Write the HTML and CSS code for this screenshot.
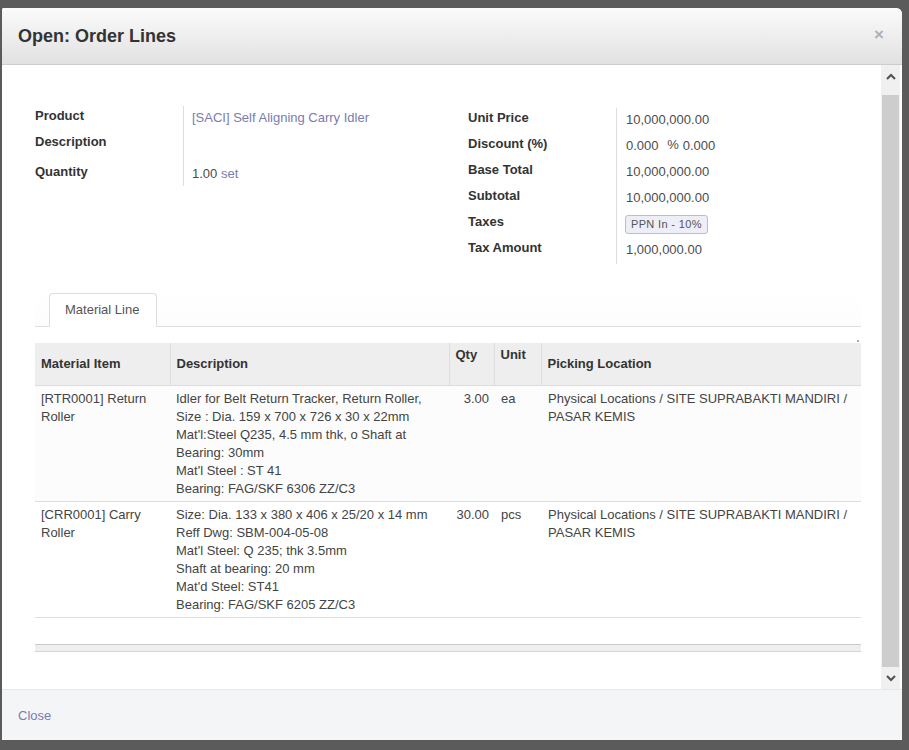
FILE: index.html
```html
<!DOCTYPE html>
<html>
<head>
<meta charset="utf-8">
<title>Open: Order Lines</title>
<link rel="stylesheet" href="styles.css">
</head>
<body>
<div class="backdrop">
  <div class="modal">
    <div class="modal-header">
      <h4 class="modal-title">Open: Order Lines</h4>
      <span class="close-x">×</span>
    </div>
    <div class="modal-body">
      <div class="content">
        <div class="form-groups">
          <div class="group group-left">
            <div class="field-label r1">Product</div>
            <div class="field-value r1"><a class="link">[SACI] Self Aligning Carry Idler</a></div>
            <div class="field-label r2">Description</div>
            <div class="field-value r2"></div>
            <div class="field-label r3">Quantity</div>
            <div class="field-value r3">1.00 <a class="link">set</a></div>
          </div>
          <div class="group group-right">
            <div class="field-label">Unit Price</div>
            <div class="field-value">10,000,000.00</div>
            <div class="field-label">Discount (%)</div>
            <div class="field-value">0.000 <span class="pct">%</span>0.000</div>
            <div class="field-label">Base Total</div>
            <div class="field-value">10,000,000.00</div>
            <div class="field-label">Subtotal</div>
            <div class="field-value">10,000,000.00</div>
            <div class="field-label">Taxes</div>
            <div class="field-value"><span class="badge">PPN In - 10%</span></div>
            <div class="field-label">Tax Amount</div>
            <div class="field-value">1,000,000.00</div>
          </div>
        </div>

        <div class="notebook">
          <div class="tab-bar">
            <div class="tab">Material Line</div>
          </div>
          <div class="tab-pane">
            <span class="dot"></span>
            <table class="lines">
              <colgroup>
                <col class="c-item"><col class="c-desc"><col class="c-qty"><col class="c-unit"><col class="c-loc">
              </colgroup>
              <thead>
                <tr>
                  <th>Material Item</th>
                  <th class="sep">Description</th>
                  <th class="sep top">Qty</th>
                  <th class="sep top">Unit</th>
                  <th class="sep">Picking Location</th>
                </tr>
              </thead>
              <tbody>
                <tr class="odd">
                  <td>[RTR0001] Return Roller</td>
                  <td>Idler for Belt Return Tracker, Return Roller,<br>Size : Dia. 159 x 700 x 726 x 30 x 22mm<br>Mat'l:Steel Q235, 4.5 mm thk, o Shaft at<br>Bearing: 30mm<br>Mat'l Steel : ST 41<br>Bearing: FAG/SKF 6306 ZZ/C3</td>
                  <td class="num">3.00</td>
                  <td>ea</td>
                  <td>Physical Locations / SITE SUPRABAKTI MANDIRI /<br>PASAR KEMIS</td>
                </tr>
                <tr>
                  <td>[CRR0001] Carry Roller</td>
                  <td>Size: Dia. 133 x 380 x 406 x 25/20 x 14 mm<br>Reff Dwg: SBM-004-05-08<br>Mat'l Steel: Q 235; thk 3.5mm<br>Shaft at bearing: 20 mm<br>Mat'd Steel: ST41<br>Bearing: FAG/SKF 6205 ZZ/C3</td>
                  <td class="num">30.00</td>
                  <td>pcs</td>
                  <td>Physical Locations / SITE SUPRABAKTI MANDIRI /<br>PASAR KEMIS</td>
                </tr>
              </tbody>
            </table>
            <div class="table-foot"></div>
          </div>
        </div>
      </div>
      <div class="scrollbar">
        <div class="sb-btn">
          <svg width="10" height="7" viewBox="0 0 10 7"><polyline points="1,6 5,2 9,6" fill="none" stroke="#505050" stroke-width="2"/></svg>
        </div>
        <div class="sb-track"><div class="sb-thumb"></div></div>
        <div class="sb-btn">
          <svg width="10" height="7" viewBox="0 0 10 7"><polyline points="1,1 5,5 9,1" fill="none" stroke="#505050" stroke-width="2"/></svg>
        </div>
      </div>
    </div>
    <div class="modal-footer">
      <a class="link close-link">Close</a>
    </div>
    <svg class="grip" width="10" height="10" viewBox="0 0 10 10"><line x1="2" y1="10" x2="10" y2="2" stroke="#222" stroke-width="1"/><line x1="6" y1="10" x2="10" y2="6" stroke="#222" stroke-width="1"/></svg>
  </div>
</div>
</body>
</html>
```

FILE: styles.css
```css
html, body {
  margin: 0;
  padding: 0;
}
body {
  width: 909px;
  height: 750px;
  overflow: hidden;
  background: #5b5b5b;
  font-family: "Liberation Sans", Arial, sans-serif;
  font-size: 13px;
  color: #4c4c4c;
}
.backdrop {
  padding: 8px 7px 10px 2px;
}
.modal {
  position: relative;
  width: 900px;
  height: 732px;
  background: #fff;
  border-radius: 2px 6px 0 0;
  display: flex;
  flex-direction: column;
  overflow: hidden;
}
.modal-header {
  height: 57px;
  flex: none;
  box-sizing: border-box;
  border-bottom: 1px solid #cdcdcd;
  background: linear-gradient(#fbfbfb, #e1e1e1);
  display: flex;
  align-items: center;
  justify-content: space-between;
  padding: 0 18px 0 16px;
}
.modal-title {
  margin: 0;
  font-size: 18px;
  font-weight: bold;
  color: #333;
}
.close-x {
  font-size: 17px;
  font-weight: bold;
  color: #b0b0b0;
  line-height: 1;
  margin-top: -4px;
}
.modal-body {
  height: 624px;
  flex: none;
  display: flex;
}
.content {
  flex: 1;
  padding: 41px 20px 0 33px;
  overflow: hidden;
}
.link {
  color: #7c7bad;
  text-decoration: none;
}

/* form */
.form-groups {
  display: grid;
  grid-template-columns: 413px 1fr;
}
.group {
  display: grid;
  grid-template-columns: 148px 1fr;
  align-content: start;
  line-height: 18px;
}
.group-right {
  padding-left: 20px;
  margin-top: 2px;
  grid-auto-rows: 26px;
}
.field-label {
  font-weight: bold;
  color: #333;
  padding-top: 1px;
  box-sizing: border-box;
}
.field-value {
  border-left: 1px solid #ddd;
  padding-left: 9px;
  padding-top: 3px;
  box-sizing: border-box;
}
.group-left .field-value {
  padding-left: 8px;
}
.r1 { height: 26px; }
.r2 { height: 30px; }
.r3 { height: 24px; }
.pct {
  margin-left: 5px;
  margin-right: 4px;
  position: relative;
  top: -1px;
}
.badge {
  display: inline-block;
  margin-top: -1px;
  margin-left: -1px;
  padding: 0 5px;
  height: 17px;
  line-height: 17px;
  font-size: 11px;
  letter-spacing: 0.35px;
  color: #555;
  background: #eeeef8;
  border: 1px solid #bdbdc4;
  border-radius: 3px;
}

/* notebook */
.notebook {
  margin-top: 29px;
}
.tab-bar {
  border-bottom: 1px solid #ddd;
  padding-left: 14px;
  display: flex;
  background: linear-gradient(#fff, #fcfcfc);
}
.tab {
  margin-bottom: -1px;
  padding: 7px 17px 7px 15px;
  line-height: 18px;
  color: #555;
  background: #fff;
  border: 1px solid #ddd;
  border-bottom-color: #fff;
  border-radius: 4px 4px 0 0;
}
.tab-pane {
  position: relative;
  padding-top: 16px;
}
.dot {
  position: absolute;
  right: 2px;
  top: 13px;
  width: 2px;
  height: 2px;
  background: #aaa;
}
.lines {
  width: 826px;
  border-collapse: collapse;
  table-layout: fixed;
  color: #444;
}
.c-item { width: 135px; }
.c-desc { width: 279px; }
.c-qty { width: 45px; }
.c-unit { width: 47px; }
.c-loc { width: 320px; }
.lines th {
  height: 42px;
  box-sizing: border-box;
  background: #eee;
  text-align: left;
  font-weight: bold;
  color: #333;
  padding: 0 6px;
  vertical-align: middle;
  border-bottom: 1px solid #ddd;
  line-height: 18px;
}
.lines th.sep {
  border-left: 1px solid #ddd;
}
.lines th.top {
  vertical-align: top;
  padding-top: 3px;
}
.lines td {
  padding: 4px 6px 3px;
  vertical-align: top;
  line-height: 18px;
  border-bottom: 1px solid #ddd;
  white-space: nowrap;
}
.lines td:first-child {
  white-space: normal;
}
.lines td:nth-child(4), .lines td:nth-child(5) {
  padding-left: 7px;
}
.lines tr.odd td {
  background: #fcfcfc;
}
.lines td.num {
  text-align: right;
  padding-right: 5px;
}
.table-foot {
  margin-top: 26px;
  width: 826px;
  height: 6px;
  background: #efefef;
  border-top: 1px solid #c9c9c9;
  border-bottom: 1px solid #d5d5d5;
}

/* scrollbar */
.scrollbar {
  width: 19px;
  margin-right: 2px;
  background: #f0f0f0;
  display: flex;
  flex-direction: column;
}
.sb-btn {
  height: 22px;
  display: flex;
  align-items: center;
  justify-content: center;
}
.sb-track {
  flex: 1;
  padding-top: 8px;
  display: flex;
}
.sb-thumb {
  flex: 1;
  margin: 0 1px;
  background: #cdcdcd;
}

/* footer */
.modal-footer {
  flex: 1;
  background: #f4f5f7;
  border-top: 1px solid #e8e8e8;
  display: flex;
  align-items: center;
  padding-left: 16px;
}
.close-link {
  font-size: 13px;
}
.grip {
  position: absolute;
  right: -5px;
  bottom: -5px;
}
```
